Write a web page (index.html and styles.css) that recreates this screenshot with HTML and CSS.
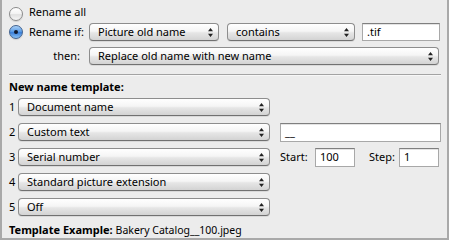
FILE: index.html
```html
<!DOCTYPE html>
<html lang="en">
<head>
  <meta charset="UTF-8">
  <title>Rename Options</title>
  <link rel="stylesheet" href="styles.css">
</head>
<body>

<div class="panel">
  <div class="opt-row">
    <span class="radio"></span>
    <span class="opt-label">Rename all</span>
  </div>

  <div class="cond-row">
    <span class="radio checked"></span>
    <span class="side-label">Rename if:</span>
    <div class="popup w-field">
      <span>Picture old name</span>
      <svg class="arrows" width="5" height="9" viewBox="0 0 5 9"><path d="M2.5 0 L5 3.2 L0 3.2 Z M0 5.8 L5 5.8 L2.5 9 Z"/></svg>
    </div>
    <div class="popup w-op">
      <span>contains</span>
      <svg class="arrows" width="5" height="9" viewBox="0 0 5 9"><path d="M2.5 0 L5 3.2 L0 3.2 Z M0 5.8 L5 5.8 L2.5 9 Z"/></svg>
    </div>
    <div class="field w-match">.tif</div>
  </div>

  <div class="then-row">
    <span class="side-label right">then:</span>
    <div class="popup w-action">
      <span>Replace old name with new name</span>
      <svg class="arrows" width="5" height="9" viewBox="0 0 5 9"><path d="M2.5 0 L5 3.2 L0 3.2 Z M0 5.8 L5 5.8 L2.5 9 Z"/></svg>
    </div>
  </div>

  <hr class="sep">

  <div class="heading">New name template:</div>

  <div class="tlist">
    <div class="trow">
      <span class="num">1</span>
      <div class="popup w-part">
        <span>Document name</span>
        <svg class="arrows" width="5" height="9" viewBox="0 0 5 9"><path d="M2.5 0 L5 3.2 L0 3.2 Z M0 5.8 L5 5.8 L2.5 9 Z"/></svg>
      </div>
    </div>
    <div class="trow">
      <span class="num">2</span>
      <div class="popup w-part">
        <span>Custom text</span>
        <svg class="arrows" width="5" height="9" viewBox="0 0 5 9"><path d="M2.5 0 L5 3.2 L0 3.2 Z M0 5.8 L5 5.8 L2.5 9 Z"/></svg>
      </div>
      <div class="field w-custom">__</div>
    </div>
    <div class="trow">
      <span class="num">3</span>
      <div class="popup w-part">
        <span>Serial number</span>
        <svg class="arrows" width="5" height="9" viewBox="0 0 5 9"><path d="M2.5 0 L5 3.2 L0 3.2 Z M0 5.8 L5 5.8 L2.5 9 Z"/></svg>
      </div>
      <span class="start-label">Start:</span>
      <div class="field w-num">100</div>
      <span class="step-label">Step:</span>
      <div class="field w-num">1</div>
    </div>
    <div class="trow">
      <span class="num">4</span>
      <div class="popup w-part">
        <span>Standard picture extension</span>
        <svg class="arrows" width="5" height="9" viewBox="0 0 5 9"><path d="M2.5 0 L5 3.2 L0 3.2 Z M0 5.8 L5 5.8 L2.5 9 Z"/></svg>
      </div>
    </div>
    <div class="trow">
      <span class="num">5</span>
      <div class="popup w-part">
        <span>Off</span>
        <svg class="arrows" width="5" height="9" viewBox="0 0 5 9"><path d="M2.5 0 L5 3.2 L0 3.2 Z M0 5.8 L5 5.8 L2.5 9 Z"/></svg>
      </div>
    </div>
  </div>

  <div class="example"><b>Template Example:</b><span class="example-value">Bakery Catalog__100.jpeg</span></div>
</div>

</body>
</html>
```

FILE: styles.css
```css
body {
  margin: 0;
  background: #ececec;
  font-family: "Noto Sans", "DejaVu Sans", sans-serif;
  font-size: 11px;
  color: #000;
}
.panel {
  width: 449px;
  height: 240px;
  box-sizing: border-box;
  border: 2px solid #a9a9a9;
  border-top: none;
  padding: 7px 0 0 5px;
}

/* radio buttons */
.radio {
  width: 14px;
  height: 14px;
  box-sizing: border-box;
  border-radius: 50%;
  border: 1px solid #8a8a8a;
  background: linear-gradient(#ffffff, #f2f2f2 50%, #e0e0e0 55%, #f6f6f6);
  box-shadow: 0 1px 1px rgba(0,0,0,0.12);
  flex: none;
  position: relative;
}
.radio.checked {
  border-color: #41628f;
  background: linear-gradient(#a9d0f7, #5e9ee6 45%, #3a7fd9 55%, #8ac2f4);
}
.radio.checked::after {
  content: "";
  position: absolute;
  left: 4px;
  top: 4px;
  width: 4px;
  height: 4px;
  border-radius: 50%;
  background: #11192c;
}

.opt-row {
  display: flex;
  align-items: flex-start;
  height: 14px;
  padding-left: 2px;
}
.opt-label {
  margin-left: 6px;
  margin-top: -2px;
  line-height: 13px;
  white-space: nowrap;
}

.cond-row, .then-row {
  display: flex;
  align-items: center;
  height: 18px;
  padding-left: 2px;
}
.cond-row {
  margin-top: 2px;
}
.then-row {
  margin-top: 6px;
  padding-left: 22px;
}
.side-label {
  width: 60px;
  box-sizing: border-box;
  line-height: 18px;
  white-space: nowrap;
  flex: none;
}
.cond-row .side-label {
  margin-left: 6px;
}
.side-label.right {
  text-align: right;
  padding-right: 9px;
}

/* popup buttons */
.popup {
  height: 18px;
  box-sizing: border-box;
  display: flex;
  align-items: center;
  justify-content: space-between;
  padding: 0 5px 0 8px;
  border: 1px solid #8d8d8d;
  border-bottom-color: #717171;
  border-radius: 4px;
  background: linear-gradient(#ffffff, #f5f5f5 45%, #e6e6e6 55%, #d3d3d3);
  box-shadow: 0 1px 0 rgba(0,0,0,0.08);
  line-height: 16px;
  white-space: nowrap;
  flex: none;
}
.arrows {
  fill: #222;
  flex: none;
}
.w-field { width: 130px; }
.w-op { width: 128px; margin-left: 8px; }
.w-action { width: 350px; }
.w-part { width: 252px; }

/* text fields */
.field {
  height: 18px;
  box-sizing: border-box;
  padding: 0 4px;
  background: #fff;
  border: 1px solid #a8a8a8;
  border-top-color: #7f7f7f;
  box-shadow: inset 0 1px 0 #e4e4e4;
  line-height: 16px;
  flex: none;
}
.w-match { width: 78px; margin-left: 7px; }
.w-custom { width: 161px; height: 19px; margin-left: 10px; }
.w-num { width: 40px; height: 19px; }

.sep {
  margin: 9px 0 0 2px;
  width: 432px;
  height: 1px;
  border: none;
  background: #a3a3a3;
  box-shadow: 0 1px 0 #f7f7f7;
}

.heading {
  margin-top: 5px;
  padding-left: 2px;
  font-weight: bold;
  line-height: 13px;
}

.tlist {
  margin-top: 5px;
  display: flex;
  flex-direction: column;
  gap: 7px;
}
.trow {
  display: flex;
  align-items: center;
  height: 18px;
  padding-left: 2px;
  line-height: 18px;
}
.num {
  width: 9px;
  flex: none;
}
.start-label {
  width: 35px;
  margin-left: 10px;
  flex: none;
}
.step-label {
  width: 30px;
  margin-left: 14px;
  flex: none;
}

.example {
  margin-top: 7px;
  padding-left: 2px;
  line-height: 13px;
  white-space: nowrap;
}
.example-value {
  margin-left: 3px;
  font-size: 10.5px;
}
```
